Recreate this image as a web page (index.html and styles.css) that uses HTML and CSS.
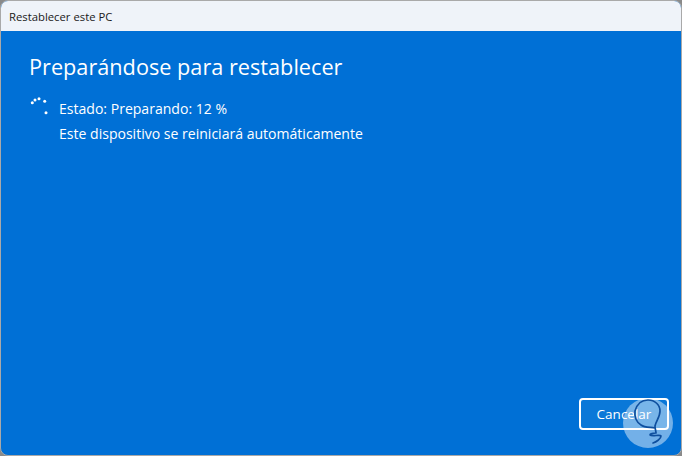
FILE: index.html
```html
<!DOCTYPE html>
<html lang="es">
<head>
    <meta charset="UTF-8">
    <title>Restablecer este PC</title>
    <link rel="stylesheet" href="styles.css">
</head>
<body>
    <div class="window">
        <div class="title-bar">Restablecer este PC</div>
        <div class="content">
            <h1>Preparándose para restablecer</h1>
            <div class="status">
                <svg class="spinner" width="20" height="20" viewBox="0 0 20 20">
                    <circle cx="3.3" cy="5.7" r="1.5"/>
                    <circle cx="6" cy="3" r="1.5"/>
                    <circle cx="10" cy="1.8" r="1.5"/>
                    <circle cx="15.7" cy="4.3" r="1.5"/>
                    <circle cx="17" cy="15.7" r="1.5"/>
                </svg>
                <div class="status-text">
                    <p>Estado: Preparando: 12 %</p>
                    <p>Este dispositivo se reiniciará automáticamente</p>
                </div>
            </div>
            <div class="actions">
                <button class="cancel-button">Cancelar</button>
            </div>
        </div>
        <!-- watermark over the button -->
        <svg class="watermark" width="50" height="50" viewBox="0 0 50 50">
            <circle cx="25" cy="25" r="25" fill="#fff" fill-opacity="0.45"/>
            <path d="M18 27C14 25 11 19 12 13C14 6 19 2 25 2C32 2 37 7 37 13C37 19 33 23 32 28C32 31 33 33 33 35M18 27C22 30 27 29 32 30M33 35C30 35 27 36 27 37C29 39 37 36 38 38C38 41 33 44 30 45" fill="none" stroke="#0f4f9e" stroke-width="1.7" stroke-linecap="round" stroke-linejoin="round"/>
        </svg>
    </div>
</body>
</html>
```
FILE: styles.css
```css
html, body {
    margin: 0;
    padding: 0;
    height: 100%;
}

body {
    background-color: #8a8a8a;
    font-family: "Open Sans", "Noto Sans", sans-serif;
}

.window {
    position: relative;
    box-sizing: border-box;
    width: 682px;
    height: 456px;
    border: 1px solid #a9a9a9;
    border-radius: 8px;
    overflow: hidden;
    display: flex;
    flex-direction: column;
    background-color: #0070d6;
}

.title-bar {
    height: 30px;
    flex-shrink: 0;
    background-color: #eff3f9;
    color: #1a1a1a;
    font-size: 11.3px;
    line-height: 31px;
    padding-left: 8px;
}

.content {
    flex: 1;
    display: flex;
    flex-direction: column;
    padding: 20px 12px 25px 28px;
    color: #fff;
}

h1 {
    margin: 0 0 16px;
    font-size: 21.7px;
    font-weight: 400;
    line-height: 32px;
}

.status {
    display: flex;
    gap: 10px;
}

.spinner {
    fill: #fff;
    flex-shrink: 0;
    margin-top: -2px;
}

.status-text p {
    margin: 0 0 6px;
    font-size: 14.05px;
    line-height: 19px;
}

.actions {
    margin-top: auto;
    display: flex;
    justify-content: flex-end;
}

.cancel-button {
    width: 90px;
    height: 32px;
    box-sizing: border-box;
    background-color: #0a78d8;
    border: 2px solid #fff;
    border-radius: 4px;
    color: #fff;
    font-family: inherit;
    font-size: 13.5px;
    padding: 0;
}

.watermark {
    position: absolute;
    right: 8px;
    bottom: 7px;
}
```
